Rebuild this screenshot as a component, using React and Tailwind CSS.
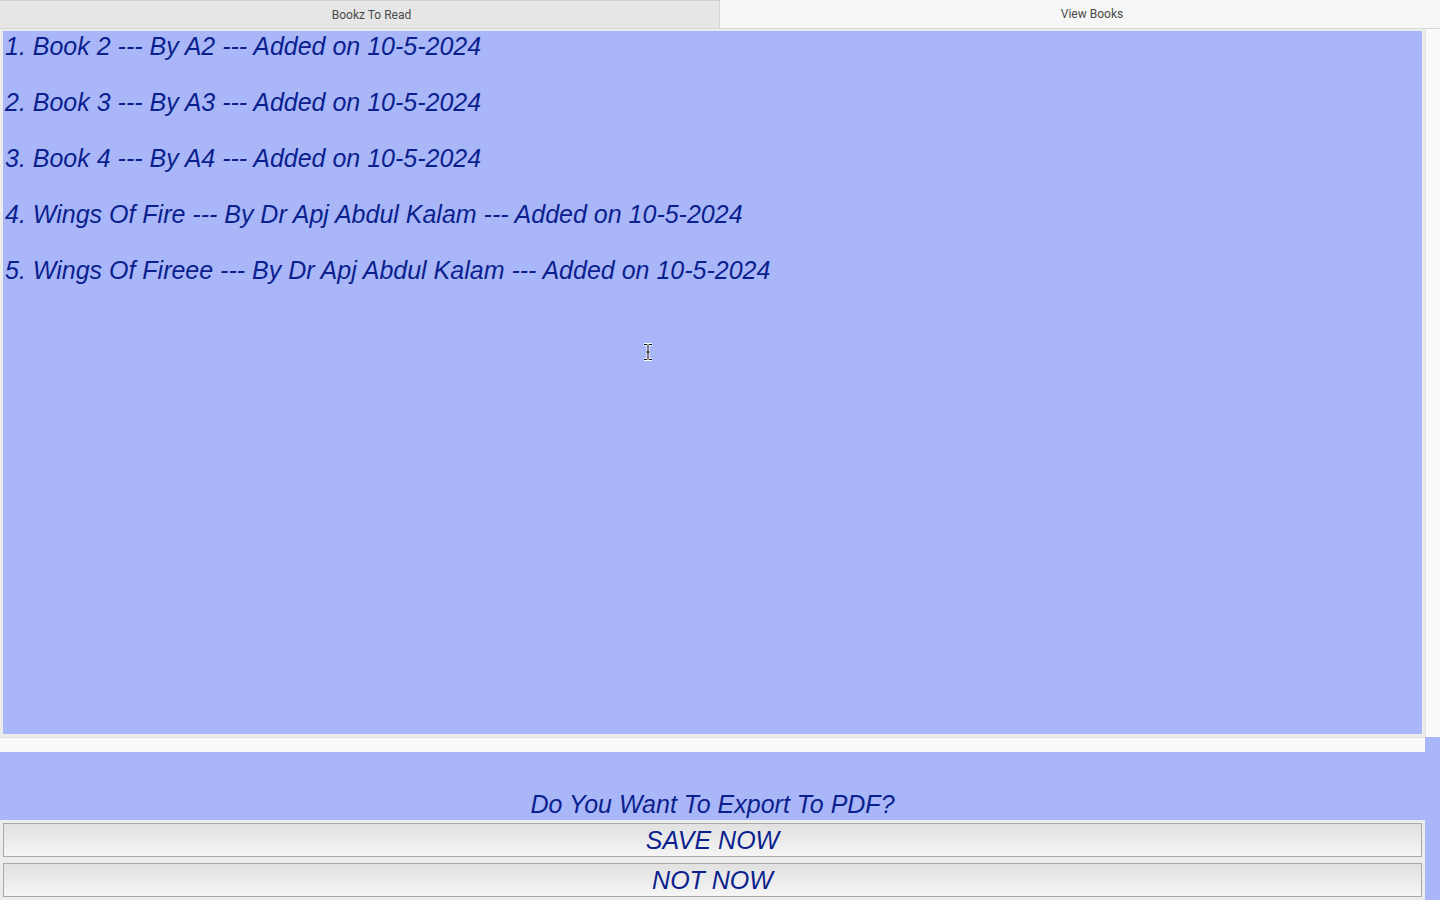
import React from "react";

const BOOKS = [
  "1. Book 2 --- By A2 --- Added on 10-5-2024",
  "2. Book 3 --- By A3 --- Added on 10-5-2024",
  "3. Book 4 --- By A4 --- Added on 10-5-2024",
  "4. Wings Of Fire --- By Dr Apj Abdul Kalam --- Added on 10-5-2024",
  "5. Wings Of Fireee --- By Dr Apj Abdul Kalam --- Added on 10-5-2024",
];

const big =
  "font-[family-name:'Liberation_Sans',Arial,sans-serif] italic text-[25px] leading-[28px] text-[#0b1f8e]";

function Tab({ label, active }) {
  return (
    <div
      className={
        "flex h-full items-center justify-center pl-6 text-[12px] text-[#4a4a4a] font-[family-name:Roboto,sans-serif] " +
        (active ? "flex-1 bg-[#f6f6f6]" : "w-[720px] border-t border-r border-t-[#cfcfcf] border-r-[#d6d6d6] bg-[#e6e6e6]")
      }
    >
      {label}
    </div>
  );
}

function Button({ children }) {
  return (
    <button className={"h-[34px] w-full border border-[#a9a9a9] bg-gradient-to-b from-[#e1e1e1] to-[#f5f5f5] " + big}>
      {children}
    </button>
  );
}

export default function App() {
  return (
    <div className="relative flex h-[900px] w-full flex-col overflow-hidden bg-[#ececec]">
      <div className="flex h-[29px] border-b border-[#d8d8d8]">
        <Tab label="Bookz To Read" />
        <Tab label="View Books" active />
      </div>

      <div className="flex flex-1">
        <div className="flex w-[1425px] flex-col">
          <div className="h-[708px] px-[3px] pt-[2px] pb-[3px]">
            <div className="h-full bg-[#a9b7f9] pl-[2px] pt-[1px]">
              {BOOKS.map((b) => (
                <p key={b} className={big + " mb-[28px] whitespace-nowrap"}>
                  {b}
                </p>
              ))}
            </div>
          </div>
          <div className="h-[15px] border-t border-[#e2e2e2] bg-[#fafafa]" />
          <div className="flex h-[68px] items-end justify-center bg-[#a9b7f9] pb-[2px]">
            <span className={big}>Do You Want To Export To PDF?</span>
          </div>
          <div className="flex h-[80px] flex-col gap-[6px] p-[3px]">
            <Button>SAVE NOW</Button>
            <Button>NOT NOW</Button>
          </div>
        </div>
        <div className="flex w-[15px] flex-col">
          <div className="h-[708px] border-l border-[#e2e2e2] bg-[#fafafa]" />
          <div className="flex-1 bg-[#a9b7f9]" />
        </div>
      </div>

      <svg className="absolute left-[643px] top-[343px]" width="10" height="18" viewBox="0 0 10 18">
        <path d="M1 1.5h3l1 1 1-1h3M5 2.5v13M1 16.5h3l1-1 1 1h3M3.5 9h3" stroke="#fff" strokeWidth="3" fill="none" />
        <path d="M1 1.5h3l1 1 1-1h3M5 2.5v13M1 16.5h3l1-1 1 1h3M3.5 9h3" stroke="#000" strokeWidth="1" fill="none" />
      </svg>
    </div>
  );
}
